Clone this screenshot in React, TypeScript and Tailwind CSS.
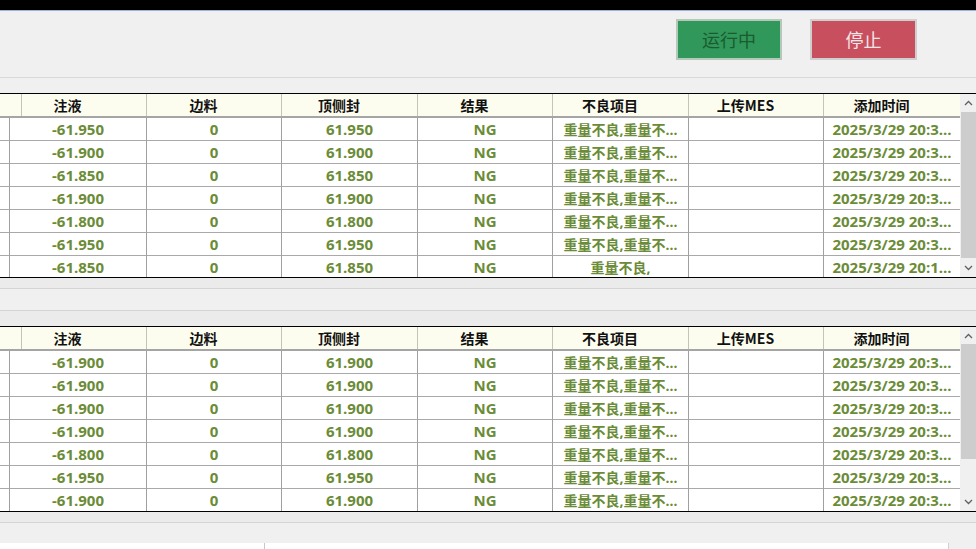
import React from "react";

const COLS = "grid-cols-[10px_137px_135px_136px_135px_136px_135px_136px]";
const HEAD = ["", "注液", "边料", "顶侧封", "结果", "不良项目", "上传MES", "添加时间"];

type Row = { v: string; bad: string; time: string };

const rows1: Row[] = [
  { v: "61.950", bad: "重量不良,重量不...", time: "2025/3/29 20:3..." },
  { v: "61.900", bad: "重量不良,重量不...", time: "2025/3/29 20:3..." },
  { v: "61.850", bad: "重量不良,重量不...", time: "2025/3/29 20:3..." },
  { v: "61.900", bad: "重量不良,重量不...", time: "2025/3/29 20:3..." },
  { v: "61.800", bad: "重量不良,重量不...", time: "2025/3/29 20:3..." },
  { v: "61.950", bad: "重量不良,重量不...", time: "2025/3/29 20:3..." },
  { v: "61.850", bad: "重量不良,", time: "2025/3/29 20:1..." },
];

const rows2: Row[] = [
  { v: "61.900", bad: "重量不良,重量不...", time: "2025/3/29 20:3..." },
  { v: "61.900", bad: "重量不良,重量不...", time: "2025/3/29 20:3..." },
  { v: "61.900", bad: "重量不良,重量不...", time: "2025/3/29 20:3..." },
  { v: "61.900", bad: "重量不良,重量不...", time: "2025/3/29 20:3..." },
  { v: "61.800", bad: "重量不良,重量不...", time: "2025/3/29 20:3..." },
  { v: "61.950", bad: "重量不良,重量不...", time: "2025/3/29 20:3..." },
  { v: "61.900", bad: "重量不良,重量不...", time: "2025/3/29 20:3..." },
];

function Up() {
  return (
    <svg width="9" height="6" viewBox="0 0 9 6">
      <path d="M1 5 L4.5 1.5 L8 5" fill="none" stroke="#606060" strokeWidth="1.3" />
    </svg>
  );
}
function Down() {
  return (
    <svg width="9" height="6" viewBox="0 0 9 6">
      <path d="M1 1 L4.5 4.5 L8 1" fill="none" stroke="#606060" strokeWidth="1.3" />
    </svg>
  );
}

function Cell({ children, last }: { children?: React.ReactNode; last?: boolean }) {
  return (
    <div
      className={`flex h-[23px] items-center justify-center overflow-hidden whitespace-nowrap border-b border-[#a9a9a9] ${
        last ? "" : "border-r border-r-[#a0a0a0]"
      }`}
    >
      {children}
    </div>
  );
}

function Table({ rows, big }: { rows: Row[]; big?: boolean }) {
  return (
    <div className={`flex ${big ? "h-[184px]" : "h-[183px]"} bg-white`}>
      <div className="flex w-[960px] flex-col overflow-hidden">
        <div className={`grid ${COLS} h-[24px] shrink-0 border-b-2 border-[#a5a5a5] bg-[#fdfdef]`}>
          {HEAD.map((h, i) => (
            <div
              key={i}
              className={`flex items-center justify-center pr-[21px] font-['Noto_Sans_CJK_SC',sans-serif] text-[14px] font-bold text-[#111] ${
                i < 7 ? "border-r border-[#c4c4b8]" : ""
              }`}
            >
              {h}
            </div>
          ))}
        </div>
        <div className="flex-1 overflow-hidden">
          {rows.map((r, i) => (
            <div key={i} className={`grid ${COLS} text-[15px] font-bold text-[#6b8c37]`}>
              <Cell />
              <Cell>-{r.v}</Cell>
              <Cell>0</Cell>
              <Cell>{r.v}</Cell>
              <Cell>NG</Cell>
              <Cell>
                <span className="text-[14px]">{r.bad}</span>
              </Cell>
              <Cell />
              <Cell last>
                <span>{r.time}</span>
              </Cell>
            </div>
          ))}
        </div>
      </div>
      <div className="flex w-[16px] flex-col items-center bg-[#f0f0f0]">
        <div className="flex h-[17px] w-full items-center justify-center pt-[1px]">
          <Up />
        </div>
        <div className={`flex w-full flex-1 flex-col ${big ? "pt-[0px]" : "pt-[1px]"}`}>
          <div className={`ml-[1px] w-[15px] bg-[#cdcdcd] ${big ? "h-[115px]" : "h-[146px]"}`} />
        </div>
        <div className="flex h-[18px] w-full items-center justify-center">
          <Down />
        </div>
      </div>
    </div>
  );
}

export default function App() {
  return (
    <div className="flex h-[549px] w-[976px] flex-col overflow-hidden bg-[#f0f0f0] font-['Open_Sans','Noto_Sans_CJK_SC',sans-serif]">
      <div className="h-[10px] bg-black" />
      <div className="h-px bg-[#9db3d2]" />
      <div className="flex h-[66px] items-start justify-end gap-[28px] pr-[59px] pt-[8px]">
        <div className="flex h-[41px] w-[106px] items-center justify-center border-2 border-[#b4c9b9] bg-[#2f985a] font-['Noto_Sans_CJK_SC',sans-serif] text-[18px] text-[#1b5b2f]">
          运行中
        </div>
        <div className="flex h-[41px] w-[107px] items-center justify-center border-2 border-[#cfcfcf] bg-[#c8505e] font-['Noto_Sans_CJK_SC',sans-serif] text-[18px] text-[#f6e6e8]">
          停止
        </div>
      </div>
      <div className="h-px bg-[#d9d9d9]" />
      <div className="h-[15px]" />
      <div className="h-px bg-black" />
      <Table rows={rows1} />
      <div className="h-px bg-black" />
      <div className="h-[10px] bg-[#ebebeb]" />
      <div className="h-px bg-[#d4d4d4]" />
      <div className="h-[21px] bg-[#f0f0f0]" />
      <div className="h-px bg-[#d4d4d4]" />
      <div className="h-[15px] bg-[#ebebeb]" />
      <div className="h-px bg-black" />
      <Table rows={rows2} big />
      <div className="h-px bg-black" />
      <div className="h-[10px] bg-[#ebebeb]" />
      <div className="h-px bg-[#d4d4d4]" />
      <div className="h-[20px] bg-[#f0f0f0]" />
      <div className="flex h-[6px]">
        <div className="w-[265px] border-r border-[#c8c8c8] bg-white" />
        <div className="w-[683px] bg-white" />
        <div className="flex-1 border-l border-[#d0d0d0] bg-[#f0f0f0]" />
      </div>
    </div>
  );
}
